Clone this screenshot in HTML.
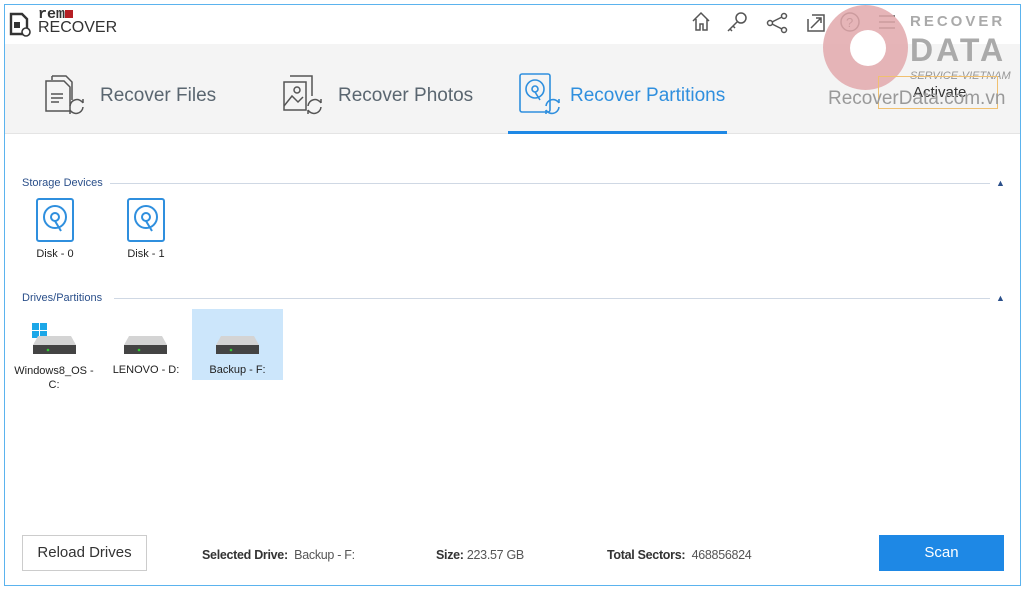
<!DOCTYPE html>
<html><head><meta charset="utf-8"><style>
*{margin:0;padding:0;box-sizing:border-box}
body{width:1024px;height:590px;background:#fff;font-family:"Liberation Sans",sans-serif;position:relative;overflow:hidden}
.win{position:absolute;left:4px;top:4px;width:1017px;height:582px;border:1px solid #5bb3ee;background:#fff}
.top{position:absolute;left:5px;top:5px;width:1015px;height:39px;background:#fff}
.tabs{position:absolute;left:5px;top:44px;width:1015px;height:90px;background:#f4f4f4;border-bottom:1px solid #e4e4e4}
.t{position:absolute;font-size:19px;color:#5a6670;top:85px}
.sec{position:absolute;font-size:11px;color:#2a4f8a}
.line{position:absolute;height:1px;background:#cfd8e4}
.lbl{position:absolute;font-size:11px;color:#222;text-align:center}
.ft{position:absolute;top:548px;font-size:12.5px;color:#555;letter-spacing:-0.3px}
.ft b{color:#333;font-weight:bold}
</style></head><body>
<div class="win"></div>
<div class="top"></div>
<div class="tabs"></div>
<svg style="position:absolute;left:9px;top:12px" width="24" height="26" viewBox="0 0 24 26"><path d="M2 2h11l5 5v15H2z" fill="none" stroke="#333" stroke-width="2.4"/><rect x="5" y="10" width="6" height="6" fill="#333"/><circle cx="17" cy="20" r="4" fill="#fff" stroke="#333" stroke-width="1.6"/></svg>
<div style="position:absolute;left:38px;top:8px;font-size:15px;line-height:13px;color:#333;font-family:'Liberation Mono',monospace;letter-spacing:0px;font-weight:bold">rem<span style="display:inline-block;width:8px;height:8px;background:#b51e24"></span><br><span style="font-family:'Liberation Sans';font-size:16px;letter-spacing:0;font-weight:normal">RECOVER</span></div>
<svg style="position:absolute;left:690px;top:10px" width="215" height="24" viewBox="0 0 215 24" fill="none" stroke="#555" stroke-width="1.5">
<path d="M3 11l8-8 8 8M6 9v11h4v-6h3v6h4V9"/>
<circle cx="51" cy="8" r="5"/><path d="M47 12l-9 9M40 19l2 2M43 16l2 2"/>
<circle cx="94" cy="6" r="2.5"/><circle cx="80" cy="13" r="2.5"/><circle cx="94" cy="20" r="2.5"/><path d="M82 12l10-5M82 14l10 5"/>
<path d="M122 5h12v16h-16V9M121 18l10-10M126 8h5v5"/>
<circle cx="160" cy="12" r="9"/><text x="156" y="17" font-size="13" fill="#555" stroke="none" font-family="Liberation Sans">?</text>
<path d="M189 6h16M189 12h16M189 18h16"/>
</svg>
<div style="position:absolute;left:823px;top:5px;width:85px;height:85px;border-radius:50%;background:#e2a8ac;opacity:.85"></div>
<div style="position:absolute;left:850px;top:30px;width:36px;height:36px;border-radius:50%;background:#fff"></div>
<div style="position:absolute;left:910px;top:13px;font-size:15px;font-weight:bold;color:#aaa;letter-spacing:3px">RECOVER</div>
<div style="position:absolute;left:910px;top:32px;font-size:32px;font-weight:bold;color:#aaa;letter-spacing:3px;line-height:36px">DATA</div>
<div style="position:absolute;left:910px;top:70px;font-size:11px;font-style:italic;color:#999">SERVICE-VIETNAM</div>
<div style="position:absolute;left:878px;top:76px;width:120px;height:33px;border:1px solid #f0c070"></div>
<div style="position:absolute;left:913px;top:84px;font-size:15px;color:#333">Activate</div>
<div style="position:absolute;left:828px;top:88px;font-size:19px;color:#999">RecoverData.com.vn</div>
<svg style="position:absolute;left:42px;top:72px" width="46" height="46" viewBox="0 0 46 46" fill="none" stroke="#555" stroke-width="1.5"><path d="M10 4h14l6 6v18M10 4v4M4 9h18l6 6v24H4z"/><path d="M9 22h12M9 26h12M9 30h8"/><path d="M28 34a7 7 0 0 1 13-3M41 31v-4M41 35a7 7 0 0 1-13 3M28 38v4"/></svg>
<div class="t" style="left:100px">Recover Files</div>
<svg style="position:absolute;left:280px;top:72px" width="46" height="46" viewBox="0 0 46 46" fill="none" stroke="#555" stroke-width="1.5"><path d="M10 4h22v20M4 10h22v28H4z"/><path d="M4 34l8-10 6 6 5-5"/><circle cx="17" cy="18" r="3"/><path d="M28 34a7 7 0 0 1 13-3M41 31v-4M41 35a7 7 0 0 1-13 3M28 38v4"/></svg>
<div class="t" style="left:338px">Recover Photos</div>
<svg style="position:absolute;left:518px;top:72px" width="46" height="46" viewBox="0 0 46 46" fill="none" stroke="#2f8fde" stroke-width="1.6"><rect x="2" y="2" width="30" height="38" rx="2"/><circle cx="17" cy="17" r="9"/><circle cx="17" cy="17" r="3"/><path d="M17 20l5 8"/><path d="M28 34a7 7 0 0 1 13-3M41 31v-4M41 35a7 7 0 0 1-13 3M28 38v4"/></svg>
<div class="t" style="left:570px;color:#2f8fde">Recover Partitions</div>
<div style="position:absolute;left:508px;top:131px;width:219px;height:3px;background:#1e88e5"></div>
<div class="sec" style="left:22px;top:177px">Storage Devices</div>
<div class="line" style="left:110px;top:183px;width:880px"></div>
<div style="position:absolute;left:996px;top:178px;font-size:9px;color:#2a4f8a">▲</div>
<svg style="position:absolute;left:35px;top:197px" width="40" height="46" viewBox="0 0 40 46" fill="none" stroke="#2f8fde" stroke-width="2"><rect x="2" y="2" width="36" height="42" rx="2"/><circle cx="20" cy="20" r="11"/><circle cx="20" cy="20" r="4"/><path d="M20 24l6 10"/></svg>
<svg style="position:absolute;left:126px;top:197px" width="40" height="46" viewBox="0 0 40 46" fill="none" stroke="#2f8fde" stroke-width="2"><rect x="2" y="2" width="36" height="42" rx="2"/><circle cx="20" cy="20" r="11"/><circle cx="20" cy="20" r="4"/><path d="M20 24l6 10"/></svg>
<div class="lbl" style="left:25px;top:248px;width:60px">Disk - 0</div>
<div class="lbl" style="left:116px;top:248px;width:60px">Disk - 1</div>
<div class="sec" style="left:22px;top:292px">Drives/Partitions</div>
<div class="line" style="left:114px;top:298px;width:876px"></div>
<div style="position:absolute;left:996px;top:293px;font-size:9px;color:#2a4f8a">▲</div>
<div style="position:absolute;left:192px;top:309px;width:91px;height:71px;background:#cce6fb"></div>
<svg style="position:absolute;left:32px;top:323px" width="15" height="15"><rect x="0" y="0" width="7" height="7" fill="#1ca7e8"/><rect x="8" y="0" width="7" height="7" fill="#1ca7e8"/><rect x="0" y="8" width="7" height="7" fill="#1ca7e8"/><rect x="8" y="8" width="7" height="7" fill="#1ca7e8"/></svg>
<svg style="position:absolute;left:32px;top:334px" width="45" height="22"><path d="M6 2h33l5 9H1z" fill="#d4d4d4"/><rect x="1" y="11" width="43" height="9" fill="#444"/><circle cx="16" cy="16" r="1.3" fill="#3c3"/></svg>
<svg style="position:absolute;left:123px;top:334px" width="45" height="22"><path d="M6 2h33l5 9H1z" fill="#d4d4d4"/><rect x="1" y="11" width="43" height="9" fill="#444"/><circle cx="16" cy="16" r="1.3" fill="#3c3"/></svg>
<svg style="position:absolute;left:215px;top:334px" width="45" height="22"><path d="M6 2h33l5 9H1z" fill="#d4d4d4"/><rect x="1" y="11" width="43" height="9" fill="#444"/><circle cx="16" cy="16" r="1.3" fill="#3c3"/></svg>
<div class="lbl" style="left:8px;top:364px;width:92px;line-height:14px">Windows8_OS -<br>C:</div>
<div class="lbl" style="left:104px;top:364px;width:84px">LENOVO - D:</div>
<div class="lbl" style="left:192px;top:364px;width:91px">Backup - F:</div>
<div style="position:absolute;left:22px;top:535px;width:125px;height:36px;border:1px solid #ccc;background:#fff;font-size:15px;color:#333;text-align:center;line-height:34px">Reload Drives</div>
<div class="ft" style="left:202px"><b>Selected Drive:</b>&nbsp; Backup - F:</div>
<div class="ft" style="left:436px"><b>Size:</b> 223.57 GB</div>
<div class="ft" style="left:607px"><b>Total Sectors:</b>&nbsp; 468856824</div>
<div style="position:absolute;left:879px;top:535px;width:125px;height:36px;background:#1e88e5;color:#fff;font-size:15px;text-align:center;line-height:36px">Scan</div>
</body></html>
